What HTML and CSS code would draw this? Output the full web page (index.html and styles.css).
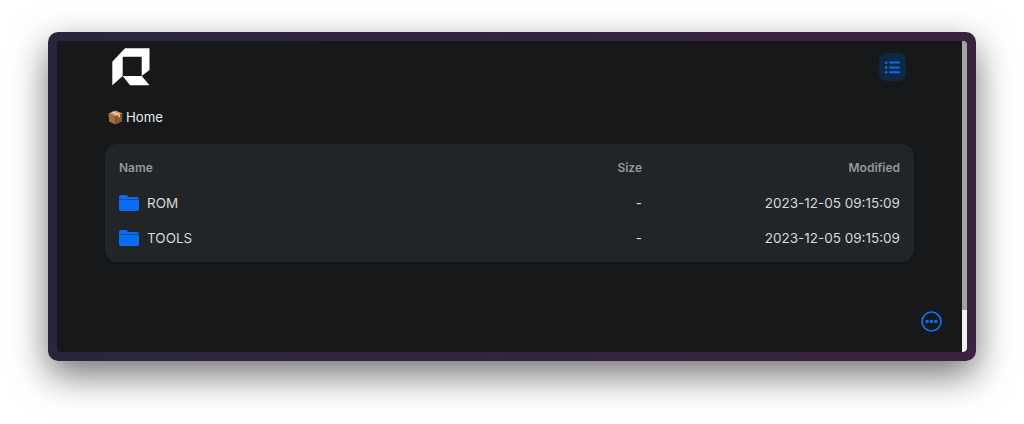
FILE: index.html
```html
<!DOCTYPE html>
<html lang="en">
<head>
    <meta charset="UTF-8">
    <title>Home</title>
    <link rel="stylesheet" href="styles.css">
</head>
<body>
    <div class="window">
        <div class="screen">
            <div class="page">
                <!-- top bar -->
                <div class="topbar">
                    <svg class="logo" width="38" height="38" viewBox="0 0 38 38">
                        <path fill="#fff" fill-rule="evenodd" d="M13 .3H37.500V22L29.700 28L37.500 37.300H18L10.700 28L.3 37.300V13.700ZM10.700 8.700V28H29.700V8.700Z"/>
                    </svg>
                    <button class="view-btn">
                        <svg width="15" height="13" viewBox="0 0 15 13">
                            <g fill="#0a6cf5">
                                <rect x="0" y="0.500" width="2.400" height="2.400" rx="1"/>
                                <rect x="0" y="5.300" width="2.400" height="2.400" rx="1"/>
                                <rect x="0" y="10.100" width="2.400" height="2.400" rx="1"/>
                                <rect x="4" y="0.600" width="11" height="2" rx="1"/>
                                <rect x="4" y="5.400" width="11" height="2" rx="1"/>
                                <rect x="4" y="10.200" width="11" height="2" rx="1"/>
                            </g>
                        </svg>
                    </button>
                </div>

                <!-- breadcrumb -->
                <div class="crumb">
                    <svg width="15" height="15" viewBox="0 0 15 15">
                        <path fill="#d29a62" d="M7.500 .5L14.500 3.500L7.500 6.500L.5 3.500Z"/>
                        <path fill="#a86f3c" d="M.5 3.500L7.500 6.500V14.500L1 11.500Z"/>
                        <path fill="#8d5a2e" d="M14.500 3.500L7.500 6.500V14.500L14 11.500Z"/>
                        <path fill="#f0dcc0" d="M3.500 2.200L10.500 5.200V7.500L11.800 7V4.600L4.800 1.600Z"/>
                    </svg>
                    <span>Home</span>
                </div>

                <!-- file table -->
                <div class="card">
                    <div class="row head">
                        <div class="name">Name</div>
                        <div class="size">Size</div>
                        <div class="modified">Modified</div>
                    </div>
                    <div class="row">
                        <div class="name">
                            <svg class="folder" width="20" height="16" viewBox="0 0 20 16"><path fill="#0a6cf5" d="M0 2Q0 0 2 0H6.500Q7.500 0 8.200 .8L9.200 2H18Q20 2 20 4.400H0ZM0 4.900H20V14Q20 16 18 16H2Q0 16 0 14Z"/></svg>
                            ROM
                        </div>
                        <div class="size">-</div>
                        <div class="modified">2023-12-05 09:15:09</div>
                    </div>
                    <div class="row">
                        <div class="name">
                            <svg class="folder" width="20" height="16" viewBox="0 0 20 16"><path fill="#0a6cf5" d="M0 2Q0 0 2 0H6.500Q7.500 0 8.200 .8L9.200 2H18Q20 2 20 4.400H0ZM0 4.900H20V14Q20 16 18 16H2Q0 16 0 14Z"/></svg>
                            TOOLS
                        </div>
                        <div class="size">-</div>
                        <div class="modified">2023-12-05 09:15:09</div>
                    </div>
                </div>
            </div>

            <div class="scrollbar"><div class="thumb"></div></div>

            <button class="more-btn">
                <svg width="21" height="21" viewBox="0 0 21 21">
                    <circle cx="10.500" cy="10.500" r="9.500" fill="none" stroke="#0a74f5" stroke-width="1.700"/>
                    <g fill="#0a74f5">
                        <circle cx="6.200" cy="10.500" r="1.700"/>
                        <circle cx="10.500" cy="10.500" r="1.700"/>
                        <circle cx="14.800" cy="10.500" r="1.700"/>
                    </g>
                </svg>
            </button>
        </div>
    </div>
</body>
</html>
```

FILE: styles.css
```css
html, body {
    margin: 0;
    height: 100%;
    background: #fff;
    overflow: hidden;
}

body {
    font-family: Inter, "Liberation Sans", sans-serif;
    padding: 32px 48px 0;
    box-sizing: border-box;
}

.window {
    height: 329px;
    padding: 9px;
    box-sizing: border-box;
    border-radius: 10px;
    background: linear-gradient(90deg, #29253d, #3a233c);
    box-shadow: 0 14px 36px rgba(0, 0, 0, 0.55);
}

.screen {
    position: relative;
    display: flex;
    height: 100%;
    background: #16181a;
    border-radius: 4px;
    overflow: hidden;
}

.page {
    flex: 1;
    padding: 7px 48px 0 48px;
}

.topbar {
    display: flex;
    justify-content: space-between;
    align-items: flex-start;
    padding: 0 8px 0 7px;
}

.logo {
    display: block;
}

.view-btn {
    width: 27px;
    height: 28px;
    margin-top: 5px;
    padding: 0;
    border: none;
    border-radius: 7px;
    background: #0e2743;
    display: flex;
    align-items: center;
    justify-content: center;
}

.crumb {
    display: flex;
    align-items: center;
    gap: 3px;
    margin-top: 20px;
    padding-left: 3px;
    height: 22px;
    color: #e8eaea;
    font-size: 13.200px;
}

.card {
    margin-top: 16px;
    padding: 6px 14px 6px;
    background: #212527;
    border-radius: 12px;
    height: 118px;
    box-sizing: border-box;
    box-shadow: 0 1px 4px rgba(0, 0, 0, 0.2);
}

.row {
    display: flex;
    align-items: center;
    height: 35px;
    color: #d6d8d9;
    font-size: 13.500px;
}

.row.head {
    height: 34px;
    margin-bottom: 1px;
    color: #94989a;
    font-size: 12px;
    font-weight: 600;
}

.name {
    flex: 1;
    display: flex;
    align-items: center;
    gap: 8px;
}

.size {
    width: 100px;
    text-align: right;
}

.modified {
    width: 258px;
    text-align: right;
}

.scrollbar {
    width: 5px;
    background: #f2f2f2;
    border-radius: 0 4px 4px 0;
}

.thumb {
    height: 269px;
    background: #a3a3a3;
}

.more-btn {
    position: absolute;
    right: 25px;
    bottom: 20px;
    padding: 0;
    border: none;
    background: none;
    display: flex;
}
```
